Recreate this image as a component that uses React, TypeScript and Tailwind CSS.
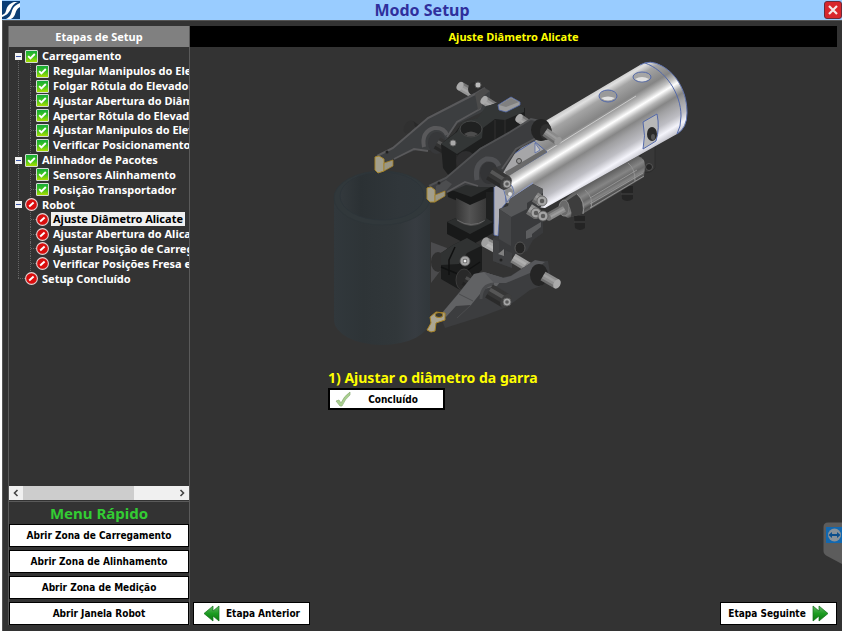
import { ReactNode } from "react";

type Status = "done" | "pending";

interface Step {
  label: string;
  status: Status;
  children?: Step[];
}

const STEPS: Step[] = [
  {
    label: "Carregamento",
    status: "done",
    children: [
      { label: "Regular Manipulos do Elevador", status: "done" },
      { label: "Folgar Rótula do Elevador", status: "done" },
      { label: "Ajustar Abertura do Diâmetro", status: "done" },
      { label: "Apertar Rótula do Elevador", status: "done" },
      { label: "Ajustar Manipulos do Elevador", status: "done" },
      { label: "Verificar Posicionamento", status: "done" },
    ],
  },
  {
    label: "Alinhador de Pacotes",
    status: "done",
    children: [
      { label: "Sensores Alinhamento", status: "done" },
      { label: "Posição Transportador", status: "done" },
    ],
  },
  {
    label: "Robot",
    status: "pending",
    children: [
      { label: "Ajuste Diâmetro Alicate", status: "pending" },
      { label: "Ajustar Abertura do Alicate", status: "pending" },
      { label: "Ajustar Posição de Carregamento", status: "pending" },
      { label: "Verificar Posições Fresa e Robot", status: "pending" },
    ],
  },
  { label: "Setup Concluído", status: "pending" },
];

const SELECTED = "Ajuste Diâmetro Alicate";

const QUICK_MENU = [
  "Abrir Zona de Carregamento",
  "Abrir Zona de Alinhamento",
  "Abrir Zona de Medição",
  "Abrir Janela Robot",
];

function StatusIcon({ status }: Readonly<{ status: Status }>) {
  if (status === "done") {
    return (
      <svg viewBox="0 0 13 13" className="size-[13px] shrink-0" aria-hidden="true">
        <defs>
          <linearGradient id="done" x1="0" y1="0" x2="0" y2="1">
            <stop offset="0" stopColor="#12a83a" />
            <stop offset="0.5" stopColor="#3fc41f" />
            <stop offset="1" stopColor="#b4e000" />
          </linearGradient>
        </defs>
        <rect x="0.5" y="0.5" width="12" height="12" rx="0.5" fill="url(#done)" stroke="#d4dcd4" />
        <path d="M3.2 6.2 5.4 8.4 9.8 4" fill="none" stroke="#fff" strokeWidth="1.9" />
      </svg>
    );
  }
  return (
    <svg viewBox="0 0 13 13" className="size-[13px] shrink-0" aria-hidden="true">
      <circle cx="6.5" cy="6.5" r="5.9" fill="#d90d0d" stroke="#e3d5d5" strokeWidth="1.1" />
      <path d="M4.2 8.4 8.6 4.6" stroke="#fff" strokeWidth="2" />
    </svg>
  );
}

function StepRow({ step, child }: Readonly<{ step: Step; child?: boolean }>) {
  const selected = step.label === SELECTED;
  return (
    <div className={`flex items-center whitespace-nowrap ${child ? "pl-[21px]" : "pl-[6px]"}`}>
      {child && (
        <span className="flex w-[6px] shrink-0 items-center self-stretch border-l border-dotted border-[#666]">
          <span className="w-full border-t border-dotted border-[#666]" />
        </span>
      )}
      {!child &&
        (step.children ? (
          <button
            type="button"
            aria-label={`Recolher ${step.label}`}
            className="relative mr-[3px] flex size-[7px] shrink-0 items-center justify-center bg-[#f2f2f2]"
          >
            <span className="h-px w-[5px] bg-[#3a55a8]" />
          </button>
        ) : (
          <span className="ml-[3px] w-[7px] shrink-0 border-t border-dotted border-[#666]" />
        ))}
      <StatusIcon status={step.status} />
      <button
        type="button"
        className={`ml-[2px] px-[2px] leading-[14px] ${selected ? "bg-[#f0f0f0] text-black" : "text-white"}`}
      >
        {step.label}
      </button>
    </div>
  );
}

function StepTree() {
  return (
    <div className="relative grid h-[237px] auto-rows-fr text-[11px]">
      <span className="absolute top-[12px] bottom-[8px] left-[9px] border-l border-dotted border-[#666]" />
      {STEPS.map((step) => (
        <div key={step.label} className="contents">
          <StepRow step={step} />
          {step.children?.map((item) => (
            <StepRow key={item.label} step={item} child />
          ))}
        </div>
      ))}
    </div>
  );
}

function FastArrow({ back }: Readonly<{ back?: boolean }>) {
  return (
    <svg
      viewBox="0 0 17 17"
      className={`size-[17px] shrink-0 ${back ? "-scale-x-100" : ""}`}
      aria-hidden="true"
    >
      <defs>
        <linearGradient id="arrow" x1="0" y1="0" x2="0" y2="1">
          <stop offset="0" stopColor="#64b865" />
          <stop offset="0.5" stopColor="#1d9c22" />
          <stop offset="1" stopColor="#0b7a10" />
        </linearGradient>
      </defs>
      <path
        d="M1 1 7 6V1L16 8.500 7 16V11L1 16Z"
        fill="url(#arrow)"
        stroke="#13701a"
        strokeWidth="0.7"
      />
    </svg>
  );
}

function ActionButton({
  children,
  className,
}: Readonly<{ children: ReactNode; className?: string }>) {
  return (
    <button
      type="button"
      className={`flex h-[23px] items-center justify-center border border-black bg-white font-['DejaVu_Sans_Condensed','DejaVu_Sans',sans-serif] text-[10px] text-black ${className ?? ""}`}
    >
      {children}
    </button>
  );
}

interface RodProps {
  from: [number, number];
  to: [number, number];
  width: number;
  color: string;
  cap: string;
}

function Rod({ from, to, width, color, cap }: Readonly<RodProps>) {
  const angle = (Math.atan2(to[1] - from[1], to[0] - from[0]) * 180) / Math.PI;
  const length = Math.hypot(to[0] - from[0], to[1] - from[1]);
  return (
    <g transform={`translate(${from[0]} ${from[1]}) rotate(${angle})`}>
      <rect y={-width / 2} width={length} height={width} fill={color} />
      <rect y={-width / 4} width={length} height={width / 4} fill="#fff" fillOpacity="0.16" />
      <rect y={width / 4} width={length} height={width / 4} fill="#000" fillOpacity="0.22" />
      <ellipse cx={length} rx={width / 3} ry={width / 2} fill={cap} />
    </g>
  );
}

function Screw({ x, y, r }: Readonly<{ x: number; y: number; r: number }>) {
  return (
    <g>
      <circle cx={x} cy={y} r={r} fill="#a5a5a5" stroke="#555" strokeWidth="0.8" />
      <circle cx={x} cy={y} r={r * 0.45} fill="#5a5a5a" />
    </g>
  );
}

function GripperDrawing() {
  return (
    <svg viewBox="328 50 371 306" className="block w-full" role="img" aria-label="Garra do robot">
      <defs>
        <linearGradient id="body" gradientUnits="userSpaceOnUse" x1="590" y1="94" x2="631" y2="161">
          <stop offset="0" stopColor="#c9c9c9" />
          <stop offset="0.05" stopColor="#e0e0e0" />
          <stop offset="0.13" stopColor="#a4a4a4" />
          <stop offset="0.3" stopColor="#858585" />
          <stop offset="0.4" stopColor="#c4c4c4" />
          <stop offset="0.46" stopColor="#ffffff" />
          <stop offset="0.53" stopColor="#b4b4b4" />
          <stop offset="0.6" stopColor="#868686" />
          <stop offset="0.68" stopColor="#a0a0a2" />
          <stop offset="0.82" stopColor="#bebec4" />
          <stop offset="0.92" stopColor="#f4f4fb" />
          <stop offset="1" stopColor="#c8c8d0" />
        </linearGradient>
        <linearGradient id="glass">
          <stop offset="0" stopColor="#31383c" />
          <stop offset="0.3" stopColor="#2e3437" />
          <stop offset="0.65" stopColor="#31373a" />
          <stop offset="0.85" stopColor="#373c41" />
          <stop offset="1" stopColor="#31373b" />
        </linearGradient>
        <linearGradient id="bore">
          <stop offset="0" stopColor="#33393d" />
          <stop offset="0.25" stopColor="#2b3134" />
          <stop offset="0.7" stopColor="#30363a" />
          <stop offset="1" stopColor="#30373b" />
        </linearGradient>
        <linearGradient id="actuator" gradientUnits="userSpaceOnUse" x1="600" y1="178" x2="612" y2="199">
          <stop offset="0" stopColor="#606060" />
          <stop offset="0.3" stopColor="#858585" />
          <stop offset="0.5" stopColor="#686868" />
          <stop offset="0.65" stopColor="#858585" />
          <stop offset="0.8" stopColor="#505050" />
          <stop offset="1" stopColor="#777" />
        </linearGradient>
        <linearGradient id="column">
          <stop offset="0" stopColor="#353535" />
          <stop offset="0.45" stopColor="#545454" />
          <stop offset="1" stopColor="#383838" />
        </linearGradient>
      </defs>

      {/* workpiece */}
      <path d="M334 198A48 27 0 0 1 430 198V320A48 25 0 0 1 334 320Z" fill="url(#glass)" />
      <ellipse cx="382" cy="198" rx="48" ry="27" fill="#31383b" stroke="#2d3539" strokeWidth="0.8" />
      <ellipse cx="382" cy="196" rx="42" ry="24" fill="url(#bore)" stroke="#2c3438" strokeWidth="0.8" />

      {/* pneumatic actuator */}
      <path d="M574 216h11v12q-5 4-10 0Z" fill="#242424" />
      <path d="M574 222h11" stroke="#444" />
      <path d="M621 186h12v13q-6 4-11 0Z" fill="#242424" />
      <path d="M621 194h12" stroke="#444" />
      <path d="M640 156 655 143V168Q650 174 644 172L638 168Z" fill="#383838" stroke="#2c2c2c" />
      <circle cx="649" cy="167" r="3.500" fill="#252525" stroke="#555" />
      <path
        d="M560 203 575 191 638 156Q645 158 645 166L644 177 584 213 568 218Q560 216 560 203Z"
        fill="url(#actuator)"
      />
      <path d="M565 202 577 194Q585 202 582 214L571 217Q573 208 565 202Z" fill="#3d3d3d" />
      <path
        d="M577 194Q586 202 583 214M585 190Q594 198 591 208M628 163Q635 168 635 181"
        fill="none"
        stroke="#909090"
      />
      <path d="M590 198 637 170M590 204 643 173M590 208 644 176" stroke="#a0a0a0" strokeWidth="0.8" />
      <ellipse cx="564" cy="208" rx="5" ry="8" fill="#6a6a6a" stroke="#858585" />
      <Rod from={[564, 208]} to={[548, 217]} width={8} color="#898989" cap="#777" />

      {/* main cylinder */}
      <path
        d="M503 190 505 165 547 120 640 65Q650 59 662 66C678 75 687 93 687 113Q687 128 677 134L545 208 506 203Z"
        fill="url(#body)"
      />
      <path d="M536 158 636 96" stroke="#fff" strokeWidth="1" strokeOpacity="0.5" />
      <path d="M640 65Q650 59 662 66C678 75 687 93 687 113Q687 128 677 134" fill="none" stroke="#6478b4" />
      <path d="M645 63C665 70 681 93 681 116Q681 127 677 134" fill="none" stroke="#5369aa" />
      <ellipse cx="642" cy="77" rx="9" ry="5" fill="#a5a5a5" stroke="#5369aa" />
      <path d="M635 79Q642 84 649 79Q642 75 635 79" fill="#e2e2e2" />
      <ellipse cx="608" cy="96" rx="9" ry="6" fill="#9a9a9a" stroke="#5369aa" />
      <path d="M601 98Q608 103 615 98Q608 95 601 98" fill="#e2e2e2" />
      <path d="M643 122 657 114Q660 128 656 141L643 149Q646 136 643 122Z" fill="#b8b8b8" stroke="#5369aa" />
      <ellipse cx="652" cy="134" rx="5" ry="7" fill="#292929" />
      <ellipse cx="653" cy="137" rx="2" ry="3" fill="#555" />
      <path d="M501 173 509 157 534 141 547 152 507 176Z" fill="#a6a6a8" stroke="#5369aa" />
      <path d="M505 172 544 149 547 152 507 177Z" fill="#6a6a6a" />
      <path d="M535 143V153L540 150Z" fill="#c5c5c5" stroke="#5369aa" strokeWidth="0.7" />
      <circle cx="519" cy="161" r="2.500" fill="#999" stroke="#444" />

      {/* rear arm */}
      <Rod from={[428, 139]} to={[409, 127]} width={14} color="#353535" cap="#303030" />
      <Rod from={[472, 93]} to={[460, 86]} width={9} color="#969696" cap="#aaa" />
      <ellipse cx="475" cy="89" rx="7" ry="7" fill="#2c2c2c" />
      <path
        d="M376 157 393 148 428 117 474 93 484 87 490 91V107L480 113 457 124 446 140 432 150H416L394 159 385 165Z"
        fill="#3c3e40"
      />
      <path d="M377 156 393 148 428 118 475 94 485 88" fill="none" stroke="#59595b" strokeWidth="2" />
      <path
        d="M394 159 414 149 428 151M447 137 457 122 480 109 481 104"
        fill="none"
        stroke="#59595b"
        strokeWidth="1.800"
      />
      <path d="M475 94 484 88 490 91 482 97V107L478 110Z" fill="#4b4b4b" />
      <path d="M424 147Q421 132 434 128Q444 127 447 135" fill="none" stroke="#59595b" strokeWidth="4" />
      <ellipse cx="437" cy="143" rx="9" ry="11" fill="#37383a" />
      <Rod from={[437, 143]} to={[449, 150]} width={13} color="#333" cap="#292929" />
      <circle cx="387" cy="152" r="1.500" fill="#202020" />
      <path d="M375 157 379 156 384 159V171L378 173 375 170Z" fill="#a39f8c" stroke="#a8872c" />
      <path d="M384 163 393 160V166L384 171Z" fill="#9a9684" stroke="#a37d21" strokeWidth="0.8" />
      <circle cx="478" cy="85" r="3" fill="#bbb" stroke="#555" />

      {/* bracket */}
      <Rod from={[495, 107]} to={[484, 100]} width={9} color="#999" cap="#aaa" />
      <path
        d="M441 144 455 133 462 123 480 118 486 107 496 103 525 108V129L508 140 484 156 458 170V178L449 176 443 168Z"
        fill="#1e1f1f"
      />
      <path
        d="M441 144 457 132 462 122 478 118 486 106 498 103 524 107 524 112 505 120 495 119 483 128 482 138 457 154Z"
        fill="#333636"
      />
      <path d="M495 120V140M505 120V139M457 155V173" stroke="#303030" />
      <ellipse cx="471" cy="129" rx="11" ry="8" fill="#202121" stroke="#454646" />
      <path d="M464 134Q471 129 478 134Q471 139 464 134Z" fill="#4d4d4d" />
      <circle cx="453" cy="143" r="3" fill="#aaa" stroke="#666" />
      <path d="M498 105 511 97 520 102V105L506 112 499 110Z" fill="#9c9c9c" stroke="#5369aa" strokeWidth="0.8" />
      <path d="M499 105 511 98 519 102 506 107Z" fill="#808080" />
      <ellipse cx="466" cy="161" rx="10" ry="10" fill="#2d2d2e" />

      {/* centre column */}
      <path d="M447 190 470 180 496 186V196L470 206 448 197Z" fill="#181919" />
      <path d="M446 188 470 178 493 186 471 197Z" fill="#2b2d2d" />
      <path d="M486 192H497V224H486Z" fill="#1f2020" />
      <path d="M456 198 470 205 486 198V223Q471 231 456 223Z" fill="url(#column)" />
      <path d="M457 220Q471 229 486 220" fill="none" stroke="#6a6a6a" />
      <path d="M447 222 456 218V222Q471 231 486 222V218L493 222V233L470 246 447 234Z" fill="#181919" />
      <path d="M447 222 456 218Q457 224 471 226Q484 225 486 218L493 222 470 234Z" fill="#2c2e2e" />

      {/* side plate */}
      <Rod from={[496, 248]} to={[485, 242]} width={10} color="#aaa" cap="#a0a0a0" />
      <path d="M494 185 505 188 506 203 500 210 498 236 494 235Z" fill="#b0b0b8" stroke="#5369aa" strokeWidth="0.8" />
      <path d="M503 187Q512 178 514 193L507 202Z" fill="#b8b8b8" stroke="#5369aa" strokeWidth="0.8" />
      <circle cx="509" cy="192" r="4" fill="#8c8c8c" />
      <circle cx="510" cy="194" r="2" fill="#e4e4e4" />
      <path d="M509 199 533 182V186L510 201Z" fill="#8b96bb" />
      <path
        d="M499 209 508 206 510 199 533 184 543 189V203L538 212 543 220V233L533 240 527 251 512 256V268L493 261V238L499 236Z"
        fill="#393a3c"
      />
      <path d="M499 209 508 206 510 199 533 184 543 189 543 193 527 203V209L511 217Z" fill="#565759" />
      <path d="M499 209 511 217V246L499 239Z" fill="#444547" />
      <path d="M493 239 499 241V252L505 255 505 250 512 253V268L493 261Z" fill="#3f4042" />
      <path d="M526 231 541 222V227L532 234V237L526 239Z" fill="#5d5e60" />
      <path d="M498 254 504 249V256Z" fill="#808080" />
      <circle cx="501" cy="260" r="1.500" fill="#222" />
      <ellipse cx="520" cy="248" rx="5" ry="6" fill="#252525" stroke="#555" />
      <Rod from={[535, 197]} to={[541, 201]} width={11} color="#858585" cap="#999" />
      <Rod from={[529, 209]} to={[537, 214]} width={11} color="#909090" cap="#777" />
      <Screw x={542} y={201} r={5} />
      <Screw x={536} y={213} r={5} />
      <Screw x={543} y={216} r={5} />

      {/* front arm */}
      <Rod from={[529, 125]} to={[519, 118]} width={9} color="#989898" cap="#aaa" />
      <path
        d="M427 188 446 178 480 148 510 132 530 119 541 121 546 135 538 139 517 150 507 166 495 187 480 187 466 185 447 193 438 197Z"
        fill="#3c3d3f"
      />
      <path d="M429 186 446 178 480 149 510 132 531 119 540 121" fill="none" stroke="#505153" strokeWidth="2" />
      <path
        d="M447 192 465 182 478 186M502 169 516 149 538 137"
        fill="none"
        stroke="#59595b"
        strokeWidth="1.800"
      />
      <path d="M477 180Q474 164 486 159Q496 158 499 166" fill="none" stroke="#505154" strokeWidth="5" />
      <ellipse cx="489" cy="173" rx="9" ry="11" fill="#333436" />
      <Rod from={[490, 173]} to={[506, 183]} width={15} color="#363636" cap="#3e3e3e" />
      <Screw x={507} y={184} r={4} />
      <ellipse cx="541" cy="130" rx="10" ry="11" fill="#242424" />
      <ellipse cx="546" cy="132" rx="6" ry="8" fill="#303030" />
      <Rod from={[545, 132]} to={[558, 141]} width={9} color="#8a8a8a" cap="#999" />
      <path d="M436 186 446 180 452 184 446 191 435 195Z" fill="#4c4d4f" />
      <circle cx="439" cy="183" r="1.500" fill="#222" />
      <path d="M427 188 431 187 435 190V202L430 202 427 199Z" fill="#a39f8c" stroke="#a8872c" />
      <path d="M435 195 445 191V196L435 202Z" fill="#9a9684" stroke="#a37d21" strokeWidth="0.8" />

      {/* lower clamp */}
      <path d="M431 242 447 248 444 266 431 283Z" fill="#4b4b4d" />
      <ellipse cx="438" cy="262" rx="7" ry="10" fill="#303030" />
      <path d="M441 253 453 245 467 238 482 247V270L460 290 441 279Z" fill="#1b1c1c" />
      <path d="M441 253 453 245 467 238 481 246 467 253 459 264 441 265Z" fill="#303232" />
      <path
        d="M455 247 449 260V275M441 267 458 274M465 272 480 262"
        fill="none"
        stroke="#101111"
        strokeWidth="1.500"
      />
      <Screw x={465} y={261} r={5} />
      <circle cx="465" cy="261" r="1.500" fill="#eee" />
      <ellipse cx="464" cy="280" rx="8" ry="11" fill="#292929" stroke="#3c3c3c" />
      <Rod from={[465, 279]} to={[476, 285]} width={13} color="#2c2c2c" cap="#353535" />

      {/* lower arm */}
      <Rod from={[513, 258]} to={[528, 267]} width={10} color="#a0a0a0" cap="#888" />
      <path
        d="M440 315 460 291 474 274 482 272 503 277 510 276 534 261 548 261 550 273 541 286 530 290 507 307 483 316 445 328Z"
        fill="#3c3d3f"
      />
      <path
        d="M442 313 459 293 474 274 484 272 503 278 497 286 484 289 471 305 456 306 446 317Z"
        fill="#616264"
      />
      <path d="M484 272 503 278 511 276 535 260 545 262 530 273 506 283 494 283Z" fill="#56575a" />
      <path d="M459 294 473 301M471 305 457 318" fill="none" stroke="#4b4c4e" />
      <ellipse cx="539" cy="275" rx="9" ry="11" fill="#252525" />
      <Rod from={[543, 276]} to={[557, 284]} width={10} color="#8d8d8d" cap="#aaa" />
      <path d="M481 299Q481 285 494 284" fill="none" stroke="#4a4b4d" strokeWidth="3" />
      <Rod from={[489, 291]} to={[506, 301]} width={15} color="#363636" cap="#3e3e3e" />
      <Screw x={507} y={302} r={4} />
      <path
        d="M430 317 436 312 445 313V320L436 323 435 331 431 332 427 330 431 323Z"
        fill="#aaa592"
        stroke="#a88325"
      />
      <ellipse cx="439" cy="315" rx="4" ry="2.500" fill="#37372f" stroke="#a88325" />
    </svg>
  );
}

export default function App() {
  return (
    <div className="flex min-h-screen flex-col overflow-hidden bg-white pl-[2px] font-['Noto_Sans','DejaVu_Sans',sans-serif] font-bold">
      <header className="flex h-[20px] items-center bg-[#99ccff]">
        <svg viewBox="0 0 18 18" className="size-[18px]" aria-hidden="true">
          <rect width="18" height="18" fill="#0b3d75" />
          <path d="M0 14C7 12 1 5 12 1H16C7 4 11 12 0 16Z" fill="#fff" />
          <path d="M4 18C13 14 6 7 18 2V6C12 9 15 15 9 18Z" fill="#fff" />
        </svg>
        <h1 className="flex-1 text-center text-[16px] leading-[20px] text-[#2f2f9c]">Modo Setup</h1>
        <button
          type="button"
          aria-label="Fechar"
          className="flex size-[18px] items-center justify-center rounded-[3px] border border-[#6b2b3a] bg-[#d8262c]"
        >
          <svg viewBox="0 0 10 10" className="size-[10px]" aria-hidden="true">
            <path d="M1 1 9 9M9 1 1 9" stroke="#f5eaea" strokeWidth="2.2" />
          </svg>
        </button>
      </header>

      <div className="flex flex-1 border-t border-l border-[#555] bg-[#333333] pt-[5px] pr-[5px] pb-[6px] pl-[5px]">
        <aside className="flex w-[182px] shrink-0 flex-col border-x border-[#5a5a5a]">
          <h2 className="h-[21px] bg-[#808080] text-center text-[11px] leading-[21px] text-white">
            Etapas de Setup
          </h2>
          <nav className="flex-1 overflow-hidden pt-[2px]">
            <StepTree />
          </nav>
          <div className="flex h-[14px] items-center bg-[#f0f0f0]">
            <button type="button" aria-label="Deslocar para a esquerda" className="flex w-[14px] justify-center">
              <svg viewBox="0 0 6 8" className="h-[8px] w-[6px]" aria-hidden="true">
                <path d="M4.500 1 1.500 4 4.500 7" fill="none" stroke="#444" strokeWidth="1.600" />
              </svg>
            </button>
            <div className="h-full flex-1">
              <div className="h-full w-[73%] bg-[#cdcdcd]" />
            </div>
            <button type="button" aria-label="Deslocar para a direita" className="flex w-[14px] justify-center">
              <svg viewBox="0 0 6 8" className="h-[8px] w-[6px]" aria-hidden="true">
                <path d="M1.500 1 4.500 4 1.500 7" fill="none" stroke="#444" strokeWidth="1.600" />
              </svg>
            </button>
          </div>
          <h2 className="mt-px h-[23px] border-t border-[#5a5a5a] text-center text-[15px] leading-[22px] text-[#33cc33]">
            Menu Rápido
          </h2>
          <div className="flex flex-col gap-[3px]">
            {QUICK_MENU.map((label) => (
              <ActionButton key={label} className="w-full">
                {label}
              </ActionButton>
            ))}
          </div>
        </aside>

        <main className="flex min-w-0 flex-1 flex-col">
          <h2 className="h-[21px] bg-black text-center text-[11px] leading-[21px] text-[#ffff00]">
            Ajuste Diâmetro Alicate
          </h2>
          <section className="mx-auto mt-[3px] w-full max-w-[371px]">
            <GripperDrawing />
            <p className="mt-[12px] text-[14px] leading-[20px] text-[#ffff00]">1) Ajustar o diâmetro da garra</p>
            <button
              type="button"
              className="flex h-[22px] w-[117px] items-center border-2 border-black bg-white pl-[5px] font-['DejaVu_Sans_Condensed','DejaVu_Sans',sans-serif] text-[10px] text-black"
            >
              <svg viewBox="0 0 16 16" className="size-[16px]" aria-hidden="true">
                <path d="M1 10 4 9 6 12Q9 5 15 1V4Q10 8 7 15H5Z" fill="#a9d08e" stroke="#8dac79" strokeWidth="0.7" />
              </svg>
              <span className="flex-1 pr-[8px] text-center">Concluído</span>
            </button>
          </section>
          <footer className="mt-auto flex justify-between pl-[3px]">
            <ActionButton className="w-[117px] gap-[6px]">
              <FastArrow back />
              Etapa Anterior
            </ActionButton>
            <ActionButton className="w-[117px] gap-[6px]">
              Etapa Seguinte
              <FastArrow />
            </ActionButton>
          </footer>
        </main>
      </div>

      {/* remote session tab over the window edge */}
      <button type="button" aria-label="Sessão remota" className="absolute right-0 bottom-[66px]">
        <svg viewBox="0 0 19 43" className="h-[43px] w-[19px]" aria-hidden="true">
          <path d="M19 0.500H5Q0.500 0.500 0.500 5V29Q0.500 32 4 34L19 42Z" fill="#5c5c5c" />
          <rect x="3" y="5" width="16" height="16" fill="#1268b0" />
          <circle cx="11.500" cy="13" r="6.500" fill="#8a9299" />
          <path d="M5.500 13 9 10V12H14V10L17.500 13 14 16V14H9V16Z" fill="#0d4f8c" />
        </svg>
      </button>
    </div>
  );
}
